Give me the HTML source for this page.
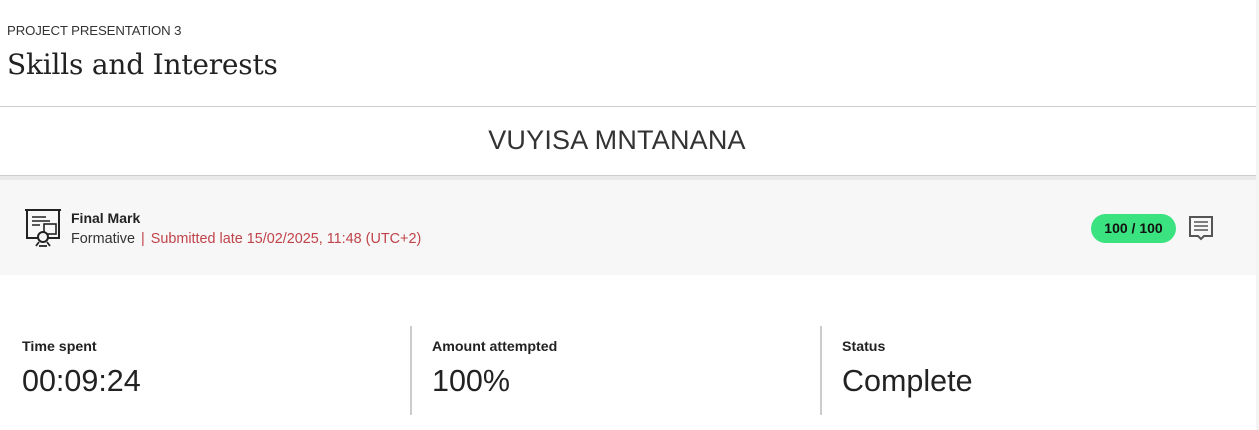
<!DOCTYPE html>
<html><head><style>
body{margin:0;width:1259px;height:430px;overflow:hidden;background:#fff;font-family:"Liberation Sans",sans-serif;position:relative;color:#222}
.wrap{position:absolute;left:0;top:0;width:1256px;height:430px;background:#fff}
.sb{position:absolute;left:1256px;top:0;width:3px;height:430px;background:#f4f4f4}
.kick{position:absolute;left:7px;top:23px;font-size:13.2px;color:#333;letter-spacing:-0.1px}
h1{position:absolute;left:7px;top:48px;margin:0;font-family:"DejaVu Serif","Liberation Serif",serif;font-weight:normal;font-size:28px;color:#222;letter-spacing:-0.2px}
.l1{position:absolute;left:0;top:106px;width:1256px;height:1px;background:#ccc}
.name{position:absolute;left:0;width:1234px;top:125px;text-align:center;font-size:27px;font-weight:300;color:#333;letter-spacing:0.2px}
.l2{position:absolute;left:0;top:175px;width:1256px;height:1px;background:#ccc}
.band{position:absolute;left:0;top:176px;width:1256px;height:4px;background:#e9e9e9}
.grey{position:absolute;left:0;top:180px;width:1256px;height:95px;background:#f7f7f7}
.fm{position:absolute;left:71px;top:210px;font-size:14px;font-weight:bold;color:#222}
.sub{position:absolute;left:71px;top:231px;font-size:14.4px;color:#333}
.sub .r{color:#c0444a}
.sub .bar{color:#c0444a;margin:0 6px}
.pill{position:absolute;left:1091px;top:214px;width:85px;height:29px;border-radius:15px;background:#3ae37f;text-align:center;line-height:29px;font-size:14px;font-weight:bold;color:#111}
.st{position:absolute;top:339px;font-size:14.2px;font-weight:bold;color:#222}
.sv{position:absolute;top:364px;font-size:30.5px;color:#222}
.vd{position:absolute;top:326px;width:2px;height:89px;background:#ccc}
</style></head><body>
<div class="wrap">
<div class="kick">PROJECT PRESENTATION 3</div>
<h1>Skills and Interests</h1>
<div class="l1"></div>
<div class="name">VUYISA MNTANANA</div>
<div class="l2"></div><div class="band"></div>
<div class="grey"></div>
<svg style="position:absolute;left:24px;top:208px" width="38" height="40" viewBox="0 0 38 40" fill="none" stroke="#222" stroke-width="2">
<path d="M1 2h36M3 2v28h12M35 2v28h-11"/>
<path d="M8 9h14M8 13h18M8 17h8" stroke-width="1.6"/>
<rect x="20" y="16" width="12" height="10" fill="#f7f7f7" stroke-width="1.6"/>
<circle cx="19" cy="29" r="5" fill="#f7f7f7"/>
<path d="M12 38l3-4M26 38l-3-4M15 38h8" stroke-width="1.8"/>
</svg>
<div class="fm">Final Mark</div>
<div class="sub">Formative<span class="bar">|</span><span class="r">Submitted late 15/02/2025, 11:48 (UTC+2)</span></div>
<div class="pill">100 / 100</div>
<svg style="position:absolute;left:1189px;top:216px" width="25" height="26" viewBox="0 0 25 26" fill="none" stroke="#555" stroke-width="2">
<path d="M1 1h22v19h-8l-3 3-3-3H1z"/>
<path d="M5 6h14M5 10h14M5 14h14" stroke-width="1.6"/>
</svg>
<div class="st" style="left:22px">Time spent</div><div class="sv" style="left:22px">00:09:24</div>
<div class="vd" style="left:410px"></div>
<div class="st" style="left:432px">Amount attempted</div><div class="sv" style="left:432px">100%</div>
<div class="vd" style="left:820px"></div>
<div class="st" style="left:842px">Status</div><div class="sv" style="left:842px">Complete</div>
</div>
<div class="sb"></div>
</body></html>
